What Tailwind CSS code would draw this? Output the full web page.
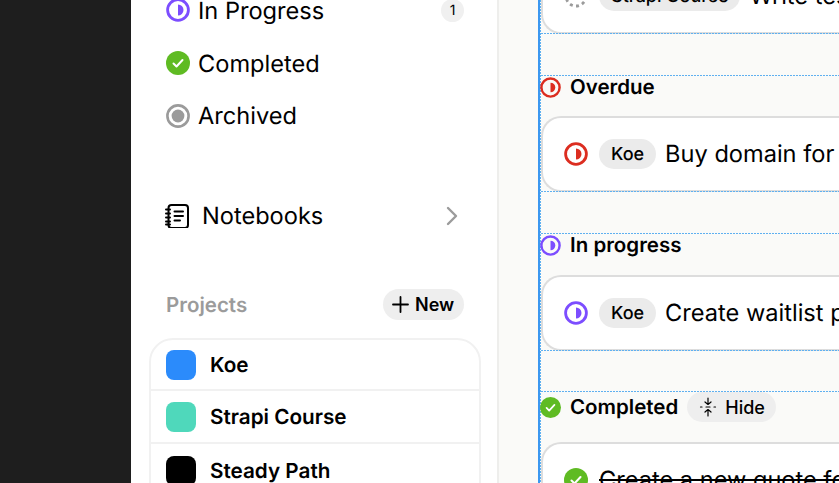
<!DOCTYPE html>
<html lang="en">
<head>
    <meta charset="UTF-8">
    <meta name="viewport" content="width=device-width, initial-scale=1.0">
    <title>Koe Tasks</title>
    <script src="https://cdn.jsdelivr.net/npm/@tailwindcss/browser@4"></script>
</head>
<body class="h-[483px] w-[839px] overflow-hidden bg-[#1e1e1e] font-['Inter',sans-serif] text-black [text-rendering:geometricPrecision]">
<div class="flex h-[483px] pl-[131px]">

    <!-- sidebar -->
    <aside class="w-[368px] shrink-0 overflow-hidden border-r-2 border-[#eeeeec] bg-white">
        <div class="-mt-[16px] pl-[35px] pr-[33px]">
            <div class="flex h-[53px] items-center gap-[8px] text-[23.6px]">
                <svg class="-mt-[2px] h-6 w-6 shrink-0" viewBox="0 0 24 24"><circle cx="12" cy="12" r="10.4" fill="none" stroke="#7c4dff" stroke-width="2.8"/><path d="M12 6.5a5.500 5.500 0 0 1 0 11z" fill="#7c4dff"/></svg>
                <span class="flex-1">In Progress</span>
                <span class="flex h-[23px] w-[23px] items-center justify-center rounded-full bg-[#f0f0f0] text-[14px]">1</span>
            </div>
            <div class="flex h-[53px] items-center gap-[8px] text-[23.6px]">
                <svg class="-mt-[2px] h-6 w-6 shrink-0" viewBox="0 0 24 24"><circle cx="12" cy="12" r="12" fill="#5fbb23"/><path d="M7.500 12.500l3 3 6-6.500" fill="none" stroke="#fff" stroke-width="2" stroke-linecap="round" stroke-linejoin="round"/></svg>
                <span>Completed</span>
            </div>
            <div class="flex h-[53px] items-center gap-[8px] text-[23.6px]">
                <svg class="-mt-[2px] h-6 w-6 shrink-0" viewBox="0 0 24 24"><circle cx="12" cy="12" r="10.6" fill="none" stroke="#9b9b9b" stroke-width="2.6"/><circle cx="12" cy="12" r="6.4" fill="#9b9b9b"/></svg>
                <span class="-mt-px">Archived</span>
            </div>

            <div class="mt-[46px] flex h-[53px] items-center text-[23.6px]">
                <svg class="-ml-px mr-[13px] h-6 w-6 shrink-0" viewBox="0 0 24 24" fill="none" stroke="#000" stroke-width="2" stroke-linecap="round" stroke-linejoin="round"><rect x="3.5" y="1" width="19.5" height="23" rx="3"/><path d="M1 5.500h4M1 9.500h4M1 13.500h4M1 17.500h4M1 20.500h4M9.500 7.500h8.500M9.500 12h8.500M9.500 16.500h5.500"/></svg>
                <span class="flex-1">Notebooks</span>
                <svg class="mr-[6px] h-5 w-3 shrink-0" viewBox="0 0 12 20" fill="none" stroke="#9b9b9b" stroke-width="2.400" stroke-linecap="round" stroke-linejoin="round"><path d="M2 2l8 8-8 8"/></svg>
            </div>

            <div class="mt-[47px] flex h-[31px] items-center justify-between">
                <span class="pt-px text-[20.500px] font-semibold text-[#9b9b9b]">Projects</span>
                <button class="flex h-[31px] w-[81px] items-center gap-[6px] rounded-full bg-[#eeeeee] pl-[9px] text-[18px] font-semibold">
                    <svg class="h-[17px] w-[17px] shrink-0" viewBox="0 0 17 17" fill="none" stroke="#000" stroke-width="1.800" stroke-linecap="round"><path d="M8.500 1v15M1 8.500h15"/></svg>
                    New
                </button>
            </div>
        </div>

        <div class="ml-[18px] mr-[16px] mt-[18px] overflow-hidden rounded-t-[24px] border-2 border-[#f1f1f1] text-[20.700px] font-semibold">
            <div class="flex h-[51px] items-center gap-[14px] border-b-2 border-[#f1f1f1] pl-[15px]">
                <span class="h-[30px] w-[30px] rounded-[8px] bg-[#2b8bfb]"></span>
                Koe
            </div>
            <div class="flex h-[53px] items-center gap-[14px] border-b-2 border-[#f1f1f1] pl-[15px]">
                <span class="h-[30px] w-[30px] rounded-[8px] bg-[#4fd8bb]"></span>
                Strapi Course
            </div>
            <div class="flex h-[53px] items-center gap-[14px] pl-[15px]">
                <span class="h-[30px] w-[30px] rounded-[8px] bg-black"></span>
                Steady Path
            </div>
        </div>
    </aside>

    <!-- task groups -->
    <main class="min-w-0 flex-1 overflow-hidden bg-[#fafaf8] pl-[39px]">
        <div class="-mt-[42px] h-[600px] w-[320px] border-l-2 border-[#3b97f0]">
        <div class="h-full bg-[repeating-linear-gradient(180deg,#5fb0f0_0,#5fb0f0_2px,transparent_2px,transparent_3px)] bg-[length:1px_100%] bg-no-repeat pl-px">

            <div class="flex h-[76px] w-[400px] items-center gap-[11px] rounded-l-[20px] border-2 border-r-0 border-[#dddddd] bg-white pl-[21px]">
                <svg class="h-6 w-6 shrink-0" viewBox="0 0 24 24"><circle cx="12" cy="12" r="10" fill="none" stroke="#9b9b9b" stroke-width="2.800" stroke-dasharray="3 3.300"/></svg>
                <span class="flex h-[30px] items-center rounded-full bg-[#ebebeb] px-[12px] text-[18px] font-medium">Strapi Course</span>
                <span class="-ml-[2px] whitespace-nowrap text-[23.600px]">Write tests</span>
            </div>
            <div class="-mt-px h-px bg-[repeating-linear-gradient(90deg,#5fb0f0_0,#5fb0f0_2px,transparent_2px,transparent_3px)]"></div>

            <div class="mt-[41px] h-px bg-[repeating-linear-gradient(90deg,#5fb0f0_0,#5fb0f0_2px,transparent_2px,transparent_3px)]"></div>
            <div class="flex h-[40px] items-center gap-[9px] pb-[18px] text-[20.500px] font-semibold">
                <svg class="-ml-px h-[21px] w-[21px] shrink-0" viewBox="0 0 24 24"><circle cx="12" cy="12" r="10.400" fill="none" stroke="#dc2d20" stroke-width="2.800"/><path d="M12 6.500a5.500 5.500 0 0 1 0 11z" fill="#dc2d20"/></svg>
                Overdue
            </div>
            <div class="flex h-[76px] w-[400px] items-center gap-[11px] rounded-l-[20px] border-2 border-r-0 border-[#dddddd] bg-white pl-[21px]">
                <svg class="h-6 w-6 shrink-0" viewBox="0 0 24 24"><circle cx="12" cy="12" r="10.400" fill="none" stroke="#dc2d20" stroke-width="2.800"/><path d="M12 6.500a5.500 5.500 0 0 1 0 11z" fill="#dc2d20"/></svg>
                <span class="flex h-[30px] items-center rounded-full bg-[#ebebeb] px-[12px] text-[18px] font-medium">Koe</span>
                <span class="-ml-[2px] whitespace-nowrap text-[23.600px]">Buy domain for Koe</span>
            </div>
            <div class="-mt-px h-px bg-[repeating-linear-gradient(90deg,#5fb0f0_0,#5fb0f0_2px,transparent_2px,transparent_3px)]"></div>

            <div class="mt-[41px] h-px bg-[repeating-linear-gradient(90deg,#5fb0f0_0,#5fb0f0_2px,transparent_2px,transparent_3px)]"></div>
            <div class="flex h-[41px] items-center gap-[9px] pb-[19px] text-[20.500px] font-semibold">
                <svg class="-ml-px h-[21px] w-[21px] shrink-0" viewBox="0 0 24 24"><circle cx="12" cy="12" r="10.400" fill="none" stroke="#7c4dff" stroke-width="2.800"/><path d="M12 6.500a5.500 5.500 0 0 1 0 11z" fill="#7c4dff"/></svg>
                In progress
            </div>
            <div class="flex h-[76px] w-[400px] items-center gap-[11px] rounded-l-[20px] border-2 border-r-0 border-[#dddddd] bg-white pl-[21px]">
                <svg class="h-6 w-6 shrink-0" viewBox="0 0 24 24"><circle cx="12" cy="12" r="10.400" fill="none" stroke="#7c4dff" stroke-width="2.800"/><path d="M12 6.500a5.500 5.500 0 0 1 0 11z" fill="#7c4dff"/></svg>
                <span class="flex h-[30px] items-center rounded-full bg-[#ebebeb] px-[12px] text-[18px] font-medium">Koe</span>
                <span class="-ml-[2px] whitespace-nowrap text-[23.600px]">Create waitlist page</span>
            </div>
            <div class="-mt-px h-px bg-[repeating-linear-gradient(90deg,#5fb0f0_0,#5fb0f0_2px,transparent_2px,transparent_3px)]"></div>

            <div class="mt-[40px] h-px bg-[repeating-linear-gradient(90deg,#5fb0f0_0,#5fb0f0_2px,transparent_2px,transparent_3px)]"></div>
            <div class="flex h-[50px] items-center gap-[9px] pb-[20px] text-[20.500px] font-semibold">
                <svg class="-ml-px h-[21px] w-[21px] shrink-0" viewBox="0 0 24 24"><circle cx="12" cy="12" r="12" fill="#5fbb23"/><path d="M7.500 12.500l3 3 6-6.500" fill="none" stroke="#fff" stroke-width="2" stroke-linecap="round" stroke-linejoin="round"/></svg>
                Completed
                <button class="flex h-[30px] w-[89px] items-center gap-[8px] rounded-full bg-[#eeeeee] pl-[12px] text-[18px] font-medium">
                    <svg class="h-[20px] w-[18px] shrink-0" viewBox="0 0 18 20" fill="none" stroke="#000" stroke-width="1.200" stroke-linecap="round" stroke-linejoin="round"><path d="M9 1v6.500M6 5l3 2.500L12 5M9 19v-6.500M6 15l3-2.500 3 2.500M1.500 10H3M7 10h4M15 10h1.500"/></svg>
                    Hide
                </button>
            </div>
            <div class="flex h-[76px] w-[400px] items-center gap-[11px] rounded-l-[20px] border-2 border-r-0 border-[#dddddd] bg-white pl-[21px]">
                <svg class="h-6 w-6 shrink-0" viewBox="0 0 24 24"><circle cx="12" cy="12" r="12" fill="#5fbb23"/><path d="M7.500 12.500l3 3 6-6.500" fill="none" stroke="#fff" stroke-width="2" stroke-linecap="round" stroke-linejoin="round"/></svg>
                <span class="whitespace-nowrap text-[23.600px] line-through">Create a new quote for</span>
            </div>
        </div>
        </div>
    </main>
</div>
</body>
</html>
